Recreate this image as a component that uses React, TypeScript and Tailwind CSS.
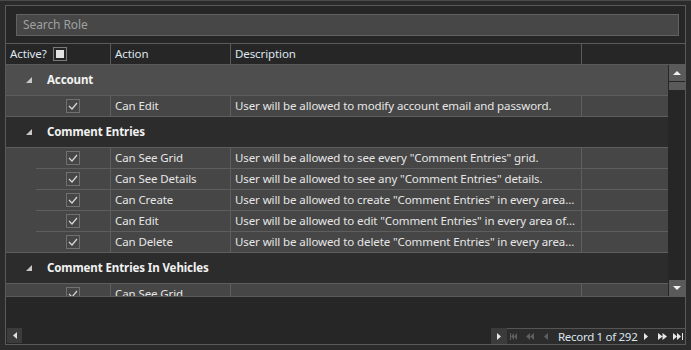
type Row = { action: string; desc: string };
type Group = { name: string; current?: boolean; rows: Row[] };

const groups: Group[] = [
  {
    name: "Account",
    current: true,
    rows: [{ action: "Can Edit", desc: "User will be allowed to modify account email and password." }],
  },
  {
    name: "Comment Entries",
    rows: [
      { action: "Can See Grid", desc: 'User will be allowed to see every "Comment Entries" grid.' },
      { action: "Can See Details", desc: 'User will be allowed to see any "Comment Entries" details.' },
      { action: "Can Create", desc: 'User will be allowed to create "Comment Entries" in every area of the application.' },
      { action: "Can Edit", desc: 'User will be allowed to edit "Comment Entries" in every area of the application.' },
      { action: "Can Delete", desc: 'User will be allowed to delete "Comment Entries" in every area of the application.' },
    ],
  },
  {
    name: "Comment Entries In Vehicles",
    rows: [{ action: "Can See Grid", desc: "" }],
  },
];

function Check() {
  return (
    <div className="w-[14px] h-[14px] border border-[#707070] flex items-center justify-center">
      <svg width="10" height="8" viewBox="0 0 10 8">
        <path d="M1 4 L4 7 L9 1" fill="none" stroke="#d8d8d8" strokeWidth="1.2" />
      </svg>
    </div>
  );
}

function Tri({ dir }: { dir: "l" | "r" }) {
  return (
    <svg width="4" height="7" viewBox="0 0 4 7">
      <path d={dir === "r" ? "M0 0 L4 3.5 L0 7 Z" : "M4 0 L0 3.5 L4 7 Z"} fill="currentColor" />
    </svg>
  );
}

function DataRow({ row, last }: { row: Row; last: boolean }) {
  return (
    <div className={`flex h-[21px] bg-[#464646] ${last ? "border-b border-[#5e5e5e]" : ""}`}>
      <div className="w-[30px] shrink-0" />
      <div className={`flex flex-1 ${last ? "" : "border-b border-[#5e5e5e]"}`}>
        <div className="w-[75px] shrink-0 border-r border-[#5e5e5e] flex items-center justify-center">
          <Check />
        </div>
        <div className="w-[120px] shrink-0 border-r border-[#5e5e5e] pl-[4px] flex items-center whitespace-nowrap">
          {row.action}
        </div>
        <div className="w-[351px] shrink-0 border-r border-[#5e5e5e] pl-[4px] pr-[4px] flex items-center min-w-0">
          <span className="truncate">{row.desc}</span>
        </div>
        <div className="flex-1" />
      </div>
    </div>
  );
}

export default function App() {
  return (
    <div
      className="w-[691px] h-[350px] bg-[#2b2b2b] border-t border-[#4a4a4a] pt-[4px] pl-[5px] text-[11.5px] tracking-[-0.1px] text-[#e6e6e6]"
      style={{ fontFamily: '"Noto Sans", "Open Sans", sans-serif' }}
    >
      <div className="w-[681px] h-[340px] border border-[#5a5a5a] bg-[#262626] flex flex-col">
        {/* search */}
        <div className="h-[38px] shrink-0 border-b border-[#5a5a5a] pt-[8px] pl-[10px] pr-[6px]">
          <div className="h-[22px] bg-[#474747] border border-[#626262] pl-[6px] flex items-center text-[#a0a0a0] text-[12px]">
            Search Role
          </div>
        </div>

        {/* header */}
        <div className="h-[21px] shrink-0 border-b border-[#5a5a5a] flex text-[#dfe7ef] leading-none">
          <div className="w-[105px] shrink-0 border-r border-[#5a5a5a] pl-[4px] flex items-center gap-[6px]">
            <span>Active?</span>
            <div className="w-[14px] h-[14px] border border-[#7a7a7a] flex items-center justify-center">
              <div className="w-[8px] h-[8px] bg-[#e4e4e4]" />
            </div>
          </div>
          <div className="w-[120px] shrink-0 border-r border-[#5a5a5a] pl-[4px] flex items-center">Action</div>
          <div className="w-[351px] shrink-0 border-r border-[#5a5a5a] pl-[4px] flex items-center">Description</div>
          <div className="flex-1" />
        </div>

        {/* body */}
        <div className="h-[232px] shrink-0 border-b border-[#5a5a5a] flex">
          <div className="w-[662px] overflow-hidden">
            {groups.map((g) => (
              <div key={g.name}>
                <div
                  className={`h-[31px] border-b border-[#5e5e5e] flex items-center pl-[20px] gap-[15px] font-bold text-[#f2f2f2] whitespace-nowrap ${
                    g.current ? "bg-[#4e4e4e]" : "bg-[#2c2c2c]"
                  }`}
                >
                  <svg width="6" height="6" viewBox="0 0 6 6">
                    <path d="M6 0 L6 6 L0 6 Z" fill="#c8c8c8" />
                  </svg>
                  <span>{g.name}</span>
                </div>
                {g.rows.map((r, i) => (
                  <DataRow key={i} row={r} last={i === g.rows.length - 1} />
                ))}
              </div>
            ))}
          </div>
          <div className="flex-1 flex flex-col pl-[1px]">
            <div className="h-[16px] bg-[#5a5a5a] flex items-center justify-center">
              <svg width="8" height="4" viewBox="0 0 8 4">
                <path d="M0 4 L4 0 L8 4 Z" fill="#f0f0f0" />
              </svg>
            </div>
            <div className="h-[8px] mt-[1px] bg-[#5a5a5a]" />
            <div className="flex-1" />
            <div className="h-[16px] bg-[#5a5a5a] flex items-center justify-center">
              <svg width="8" height="4" viewBox="0 0 8 4">
                <path d="M0 0 L8 0 L4 4 Z" fill="#f0f0f0" />
              </svg>
            </div>
          </div>
        </div>

        {/* footer */}
        <div className="flex-1 flex items-end">
          <div className="ml-[1px] mb-[1px] w-[15px] h-[15px] bg-[#3c3c3c] flex items-center justify-center text-[#e0e0e0]">
            <Tri dir="l" />
          </div>
          <div className="flex-1" />
          <div className="w-[16px] h-[16px] bg-[#3b3b3b] flex items-center justify-center text-[#e8e8e8]">
            <Tri dir="r" />
          </div>
          <div className="w-[178px] h-[16px] border-t border-[#555555] bg-[#2c2c2c] flex items-center pl-[3px] text-[#5e5e5e] whitespace-nowrap">
            <svg className="shrink-0" width="7" height="7" viewBox="0 0 7 7">
              <rect x="0" y="0" width="1" height="7" fill="currentColor" />
              <path d="M4 0 L1 3.5 L4 7 Z M7 0 L4 3.5 L7 7 Z" fill="currentColor" />
            </svg>
            <svg className="ml-[9px] shrink-0" width="8" height="7" viewBox="0 0 8 7">
              <path d="M4 0 L0 3.5 L4 7 Z M8 0 L4 3.5 L8 7 Z" fill="currentColor" />
            </svg>
            <svg className="ml-[10px] shrink-0" width="4" height="7" viewBox="0 0 4 7">
              <path d="M4 0 L0 3.5 L4 7 Z" fill="currentColor" />
            </svg>
            <span className="ml-[10px] text-[#dbe5ef] leading-none text-[11.5px] tracking-[-0.3px]">Record 1 of 292</span>
            <span className="ml-auto text-[#e8e8e8] flex items-center shrink-0">
              <Tri dir="r" />
              <svg className="ml-[10px]" width="9" height="7" viewBox="0 0 9 7">
                <path d="M0 0 L4.5 3.5 L0 7 Z M4.5 0 L9 3.5 L4.5 7 Z" fill="currentColor" />
              </svg>
              <svg className="ml-[6px] mr-[2px]" width="10" height="7" viewBox="0 0 10 7">
                <path d="M0 0 L4 3.5 L0 7 Z M4 0 L8 3.5 L4 7 Z" fill="currentColor" />
                <rect x="9" y="0" width="1" height="7" fill="currentColor" />
              </svg>
            </span>
          </div>
        </div>
      </div>
    </div>
  );
}
